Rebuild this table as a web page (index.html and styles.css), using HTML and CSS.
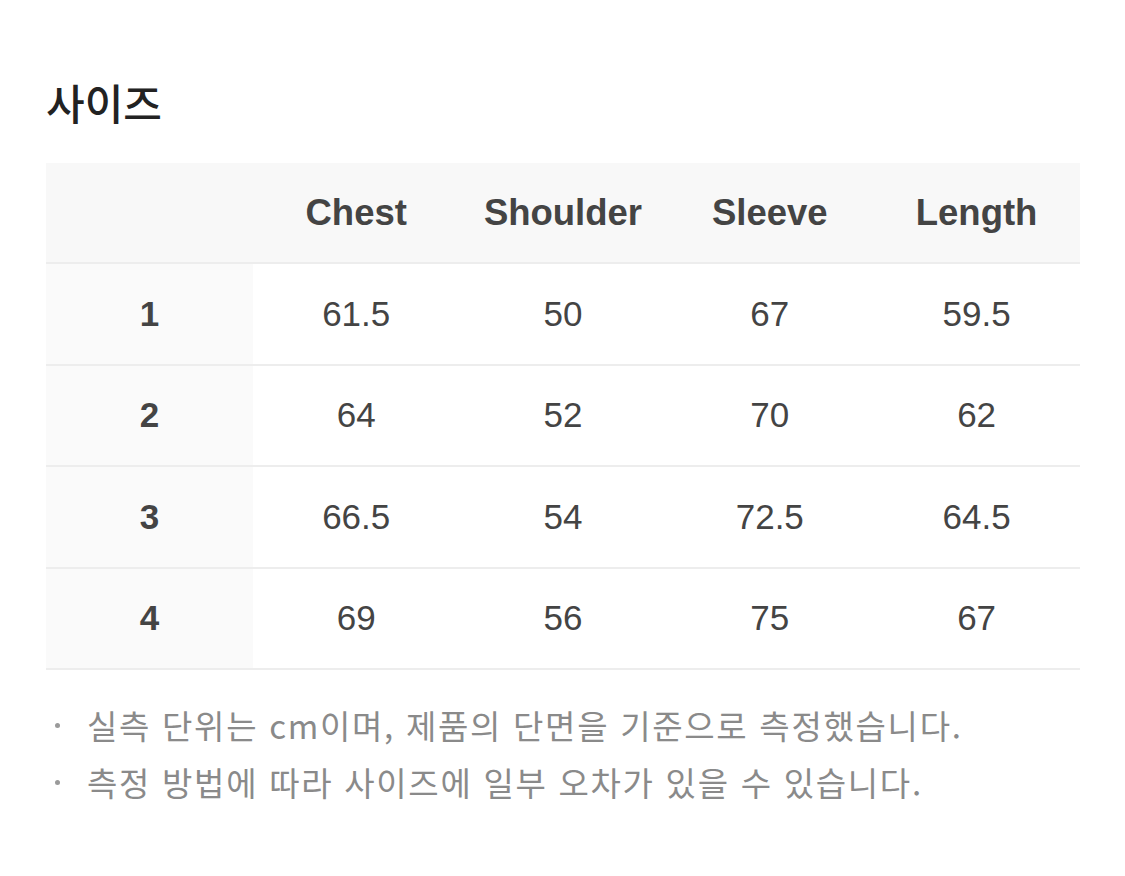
FILE: index.html
```html
<!DOCTYPE html>
<html lang="ko">
<head>
<meta charset="utf-8">
<title>사이즈</title>
<link rel="stylesheet" href="styles.css">
</head>
<body>
<section class="size">
  <h2 class="size-title">사이즈</h2>
  <table class="size-table">
    <thead>
      <tr>
        <th class="label"></th>
        <th>Chest</th>
        <th>Shoulder</th>
        <th>Sleeve</th>
        <th>Length</th>
      </tr>
    </thead>
    <tbody>
      <tr><th class="label">1</th><td>61.5</td><td>50</td><td>67</td><td>59.5</td></tr>
      <tr><th class="label">2</th><td>64</td><td>52</td><td>70</td><td>62</td></tr>
      <tr><th class="label">3</th><td>66.5</td><td>54</td><td>72.5</td><td>64.5</td></tr>
      <tr><th class="label">4</th><td>69</td><td>56</td><td>75</td><td>67</td></tr>
    </tbody>
  </table>
  <ul class="size-notes">
    <li>실측 단위는 cm이며, 제품의 단면을 기준으로 측정했습니다.</li>
    <li>측정 방법에 따라 사이즈에 일부 오차가 있을 수 있습니다.</li>
  </ul>
</section>
</body>
</html>
```

FILE: styles.css
```css
html, body {
  margin: 0;
  padding: 0;
  background: #ffffff;
}

body {
  font-family: "Liberation Sans", "Noto Sans CJK KR", sans-serif;
  color: #444444;
}

.size {
  padding: 73px 45px 0 46px;
}

.size-title {
  margin: 0;
  font-family: "Noto Sans CJK KR", sans-serif;
  font-size: 42px;
  line-height: 58px;
  font-weight: 500;
  color: #222222;
}

.size-table {
  width: 100%;
  margin-top: 32px;
  border-collapse: collapse;
  table-layout: fixed;
}

.size-table th,
.size-table td {
  height: 99.5px;
  padding: 0;
  text-align: center;
  vertical-align: middle;
  font-size: 35px;
  color: #444444;
  border-bottom: 2px solid #ededed;
}

.size-table td {
  font-weight: 400;
}

.size-table th {
  font-weight: 700;
}

.size-table thead th {
  height: 99px;
  font-size: 36.5px;
  background: #f8f8f8;
}

.size-table tbody .label {
  background: #fafafa;
}

.size-notes {
  list-style: none;
  margin: 27px 0 0;
  padding: 0;
  font-family: "Noto Sans CJK KR", sans-serif;
  font-size: 33px;
  letter-spacing: 1.7px;
  line-height: 57px;
  color: #8a8a8a;
}

.size-notes li {
  display: flex;
  align-items: center;
}

.size-notes li::before {
  content: "";
  width: 5px;
  height: 5px;
  border-radius: 50%;
  background: #9a9a9a;
  margin: 0 27px 0 9px;
  flex: none;
}
```
